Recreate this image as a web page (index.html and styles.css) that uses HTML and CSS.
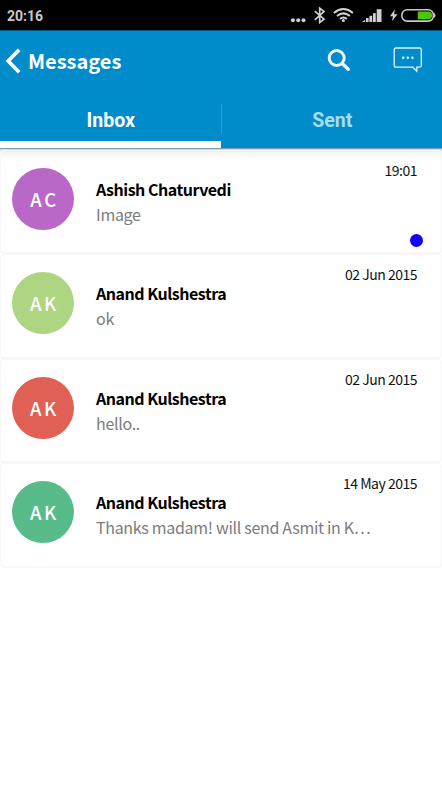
FILE: index.html
```html
<!DOCTYPE html>
<html lang="en">
<head>
  <meta charset="UTF-8" />
  <title>Messages</title>
  <meta name="viewport" content="width=device-width, initial-scale=1.0" />
  <link rel="stylesheet" href="styles.css">
</head>
<body>

  <div class="status-bar">
    <span class="clock">20:16</span>
    <svg class="status-icons" width="152" height="30" viewBox="0 0 152 30">
      <g fill="#d0d0d0">
        <circle cx="2.9" cy="20.3" r="2" />
        <circle cx="8.2" cy="20.3" r="2" />
        <circle cx="13.5" cy="20.3" r="2" />
      </g>
      <!-- bluetooth -->
      <path d="M24.8 11.2L34 19.2L29.7 22.6V8.2L34 11.6L24.8 19.8" fill="none" stroke="#d0d0d0" stroke-width="1.7" />
      <!-- wifi -->
      <g fill="none" stroke="#d0d0d0" stroke-width="2">
        <path d="M43.9 12.9Q53.4 5.1 62.9 12.9" />
        <path d="M47 16Q53.4 10.8 59.8 16" />
        <path d="M50 18.9Q53.4 16.2 56.8 18.9" />
      </g>
      <circle cx="53.4" cy="20.6" r="1.5" fill="#d0d0d0" />
      <!-- signal -->
      <g fill="#d0d0d0">
        <path d="M72 22L75.2 19.8V22Z" />
        <rect x="76" y="18" width="2.6" height="4" />
        <rect x="79.4" y="15.8" width="2.8" height="6.2" />
        <rect x="83" y="13.2" width="2.8" height="8.8" />
        <rect x="86.7" y="9.2" width="4.8" height="12.8" />
      </g>
      <path d="M104.9 9.3L100 16.2H103L101.8 21.3L107.6 14.3H104.1Z" fill="#d0d0d0" />
      <rect x="111.9" y="9.7" width="31.5" height="11.4" rx="5.2" fill="none" stroke="#c8c8c8" stroke-width="1.6" />
      <path d="M144 12.8Q147 15.4 144 18" fill="#c8c8c8" />
      <path d="M127.8 11.6H139Q142.2 12.6 142.2 15.4Q142.2 18.2 139 19.2H127.8Z" fill="#4bc800" />
    </svg>
  </div>

  <header class="header">
    <div class="toolbar">
      <svg class="back" width="16" height="26" viewBox="0 0 16 26">
        <path d="M14.2 1.7L3.2 13L14.2 24.3" fill="none" stroke="#fff" stroke-width="3.7" />
      </svg>
      <h1 class="title">Messages</h1>
      <svg class="search" width="24" height="24" viewBox="0 0 24 24">
        <circle cx="9.7" cy="9" r="7.5" fill="none" stroke="#f2f6ff" stroke-width="3" />
        <path d="M15.2 14.5L21.3 20.3" stroke="#f2f6ff" stroke-width="3.4" stroke-linecap="round" />
      </svg>
      <svg class="compose" width="30" height="26" viewBox="0 0 30 26">
        <path d="M3 1H26.5Q28.3 1 28.3 2.8V18.5Q28.3 20.2 26.5 20.2H23.8V24.2L19.8 20.2H3Q1.2 20.2 1.2 18.5V2.8Q1.2 1 3 1Z" fill="none" stroke="#e4f3fb" stroke-width="1.3" />
        <g fill="#fff">
          <circle cx="10.2" cy="10.7" r="1.2" />
          <circle cx="14.8" cy="10.7" r="1.2" />
          <circle cx="19.4" cy="10.7" r="1.2" />
        </g>
      </svg>
    </div>
    <nav class="tabs">
      <a class="tab active">Inbox</a>
      <span class="divider"></span>
      <a class="tab">Sent</a>
    </nav>
  </header>

  <main class="messages">
    <div class="message">
      <div class="avatar purple">A C</div>
      <div class="content">
        <div class="name">Ashish Chaturvedi</div>
        <div class="preview">Image</div>
      </div>
      <div class="meta">
        <span class="date">19:01</span>
        <span class="unread"></span>
      </div>
    </div>
    <div class="message">
      <div class="avatar lime">A K</div>
      <div class="content">
        <div class="name">Anand Kulshestra</div>
        <div class="preview">ok</div>
      </div>
      <div class="meta"><span class="date">02 Jun 2015</span></div>
    </div>
    <div class="message">
      <div class="avatar red">A K</div>
      <div class="content">
        <div class="name">Anand Kulshestra</div>
        <div class="preview">hello..</div>
      </div>
      <div class="meta"><span class="date">02 Jun 2015</span></div>
    </div>
    <div class="message">
      <div class="avatar green">A K</div>
      <div class="content">
        <div class="name">Anand Kulshestra</div>
        <div class="preview">Thanks madam! will send Asmit in K…</div>
      </div>
      <div class="meta"><span class="date">14 May 2015</span></div>
    </div>
  </main>

</body>
</html>
```
FILE: styles.css
```css
* {
  box-sizing: border-box;
}

body {
  margin: 0;
  height: 786px;
  overflow: hidden;
  background: #fff;
  font-family: "Noto Sans CJK SC", "Noto Sans", sans-serif;
}

svg {
  display: block;
  flex: none;
}

/* Status bar */
.status-bar {
  display: flex;
  justify-content: space-between;
  height: 30px;
  padding-left: 7px;
  background: #000;
}

.clock {
  color: #c8c8c8;
  font: bold 14px/32px Roboto, sans-serif;
}

/* Header */
.header {
  height: 119px;
  background: #008bcb;
  border-top: 1px solid #00557c;
  border-bottom: 1px solid #7c9fb9;
}

.toolbar {
  display: flex;
  align-items: flex-start;
  height: 60px;
  padding: 0 19px 0 5px;
}

.back {
  margin-top: 17px;
}

.title {
  flex: 1;
  margin: 16px 0 0 7px;
  color: #fff;
  font-size: 20px;
  font-weight: bold;
  line-height: 28px;
}

.search {
  margin: 18px 42px 0 0;
}

.compose {
  margin-top: 16px;
}

.tabs {
  display: flex;
  height: 57px;
}

.tab {
  flex: 1;
  color: #a5deea;
  font: bold 19.5px/60px Roboto, sans-serif;
  text-align: center;
  text-indent: 1px;
}

.tab.active {
  color: #fff;
  border-bottom: 7px solid #fff;
}

.divider {
  width: 1px;
  height: 30px;
  margin-top: 13px;
  background: #2c9fd5;
}

/* Message list */
.messages {
  padding-top: 1px;
  background: linear-gradient(#d4d4d4, #f4f4f4 3px, #fff 11px);
}

.message {
  display: flex;
  height: 104.4px;
  padding: 17px 0 0 11px;
  border: 1px solid #f8f8f8;
  border-bottom-width: 2px;
  border-radius: 4px;
}

.avatar {
  flex: none;
  width: 62px;
  height: 62px;
  border-radius: 50%;
  color: #fff;
  font-size: 18.5px;
  font-weight: 500;
  letter-spacing: -0.3px;
  line-height: 62px;
  text-align: center;
  word-spacing: -1px;
}

.purple { background: #ba68c8; }
.lime { background: #aed581; }
.red { background: #e06055; }
.green { background: #57bb8a; }

.content {
  flex: 1;
  min-width: 0;
  padding: 9px 0 0 22px;
  white-space: nowrap;
}

.name {
  color: #000;
  font-size: 16px;
  font-weight: bold;
  letter-spacing: -0.48px;
  line-height: 25px;
}

.preview {
  color: #7c7c7c;
  font-size: 16px;
  letter-spacing: -0.31px;
  line-height: 25px;
}

.meta {
  display: flex;
  flex: none;
  flex-direction: column;
  align-items: flex-end;
  margin-top: -8px;
  padding-right: 24px;
}

.date {
  color: #111;
  font-size: 14px;
  letter-spacing: -0.5px;
  line-height: 20px;
}

.unread {
  width: 13px;
  height: 13px;
  margin: 54px -6px 0 0;
  border-radius: 50%;
  background: #1100f5;
}
```
